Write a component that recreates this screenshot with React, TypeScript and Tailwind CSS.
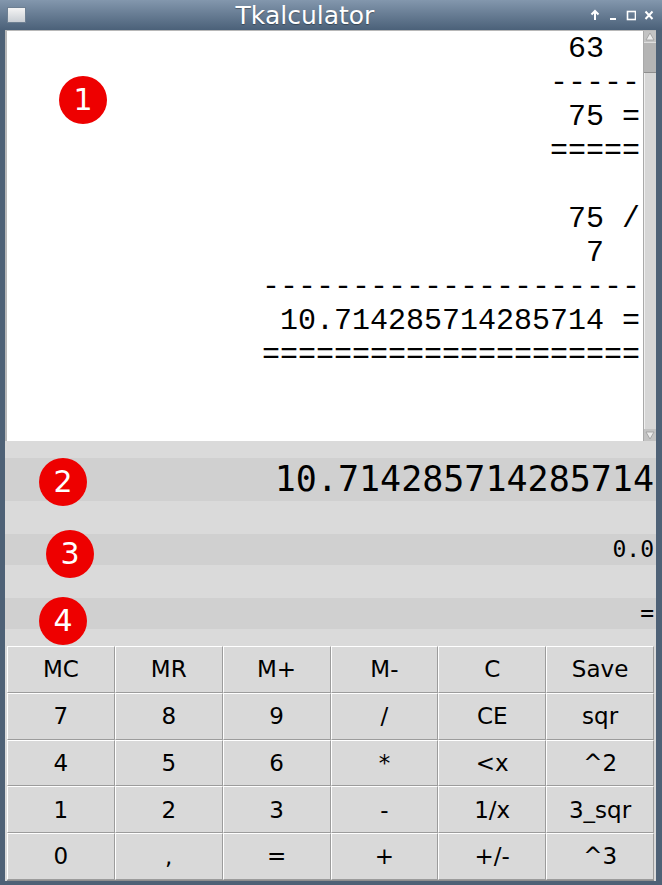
const tapeLines = [
  '63  ',
  '-----',
  '75 =',
  '=====',
  ' ',
  '75 /',
  '7  ',
  '---------------------',
  ' 10.714285714285714 =',
  '=====================',
];

const keys = [
  ['MC', 'MR', 'M+', 'M-', 'C', 'Save'],
  ['7', '8', '9', '/', 'CE', 'sqr'],
  ['4', '5', '6', '*', '<x', '^2'],
  ['1', '2', '3', '-', '1/x', '3_sqr'],
  ['0', ',', '=', '+', '+/-', '^3'],
];

function Marker({ n, className }: { n: number; className: string }) {
  return (
    <div
      className={`absolute w-[48px] h-[48px] rounded-full bg-[#ee0000] flex items-center justify-center text-white text-[30px] leading-none font-['DejaVu_Sans',sans-serif] ${className}`}
    >
      {n}
    </div>
  );
}

function TitleBar() {
  return (
    <div className="relative h-[30px] shrink-0 bg-gradient-to-b from-[#8397ad] to-[#4b6179] flex items-center justify-center pr-[52px]">
      <div className="absolute left-[7px] top-[7px] w-[19px] h-[16px] bg-gradient-to-b from-[#f4f4f4] to-[#c9ced4] border border-[#6d7f92]" />
      <span className="text-white text-[25px] leading-none font-['DejaVu_Sans',sans-serif] [text-shadow:0_1px_1px_rgba(0,0,0,0.35)]">
        Tkalculator
      </span>
      <div className="absolute right-[8px] top-[9px] flex items-center gap-[8px]">
        <svg width="10" height="12" viewBox="0 0 10 12">
          <path d="M5 2 L5 11 M1.5 5.5 L5 2 L8.5 5.5" stroke="white" strokeWidth="2" fill="none" />
        </svg>
        <svg width="10" height="12" viewBox="0 0 10 12">
          <path d="M2 10 L8 10" stroke="white" strokeWidth="2" />
        </svg>
        <svg width="10" height="12" viewBox="0 0 10 12">
          <rect x="1.5" y="2.5" width="8" height="8" stroke="white" strokeWidth="1.6" fill="none" />
        </svg>
        <svg width="10" height="12" viewBox="0 0 10 12">
          <path d="M1.5 2.5 L8.5 10 M8.5 2.5 L1.5 10" stroke="white" strokeWidth="2" />
        </svg>
      </div>
    </div>
  );
}

function Scrollbar() {
  return (
    <div className="w-[13px] shrink-0 bg-[#cdcdcd] border-l border-[#a9a9a9] flex flex-col">
      <div className="h-[11px] flex items-center justify-center bg-[#c3c3c3]">
        <svg width="10" height="9" viewBox="0 0 10 9">
          <path d="M5 1 L9 8 L1 8 Z" fill="#ececec" stroke="#9a9a9a" strokeWidth="0.8" />
        </svg>
      </div>
      <div className="h-[31px] bg-[#b4b4b4] border-t border-[#dedede] border-b border-b-[#8e8e8e]" />
      <div className="flex-1 bg-[#d6d6d6] border-l border-[#efefef]" />
      <div className="h-[12px] flex items-center justify-center bg-[#c3c3c3]">
        <svg width="10" height="9" viewBox="0 0 10 9">
          <path d="M1 1 L9 1 L5 8 Z" fill="#ececec" stroke="#9a9a9a" strokeWidth="0.8" />
        </svg>
      </div>
    </div>
  );
}

export default function App() {
  return (
    <div className="w-[662px] h-[885px] bg-[#4e6176] flex flex-col overflow-hidden">
      <TitleBar />
      <div className="flex-1 ml-[5px] mr-[6px] mb-[4px] bg-[#dadada] flex flex-col">
        <div className="relative h-[411px] flex border-l-2 border-t border-[#b8b8b8]">
          <div className="flex-1 bg-white pr-[3px] pt-[1px] font-['Liberation_Mono',monospace] text-[30px] leading-[34px] text-black">
            {tapeLines.map((line, i) => (
              <div key={i} className="text-right whitespace-pre">
                {line}
              </div>
            ))}
          </div>
          <Scrollbar />
          <Marker n={1} className="left-[52px] top-[45px]" />
        </div>

        <div className="relative flex flex-col font-['DejaVu_Sans_Mono',monospace] text-black">
          <div className="h-[17px]" />
          <div className="h-[43px] bg-[#d0d0d0] flex items-center justify-end pr-[2px] text-[35px]">
            10.714285714285714
          </div>
          <div className="h-[33px]" />
          <div className="h-[31px] bg-[#d0d0d0] flex items-center justify-end pr-[2px] text-[23px]">
            0.0
          </div>
          <div className="h-[33px]" />
          <div className="h-[31px] bg-[#d0d0d0] flex items-center justify-end pr-[2px] text-[23px]">
            =
          </div>
          <div className="h-[17px]" />
          <Marker n={2} className="left-[34px] top-[17px]" />
          <Marker n={3} className="left-[41px] top-[89px]" />
          <Marker n={4} className="left-[34px] top-[156px]" />
        </div>

        <div className="flex-1 mx-[2px] grid grid-cols-6 grid-rows-5 border-b border-[#8f8f8f]">
          {keys.flat().map((k, i) => (
            <div
              key={i}
              className="flex items-center justify-center bg-[#d9d9d9] border-t border-l border-t-white border-l-white border-r border-b border-r-[#9c9c9c] border-b-[#9c9c9c] text-[23px] text-black font-['DejaVu_Sans',sans-serif]"
            >
              {k}
            </div>
          ))}
        </div>
      </div>
    </div>
  );
}
